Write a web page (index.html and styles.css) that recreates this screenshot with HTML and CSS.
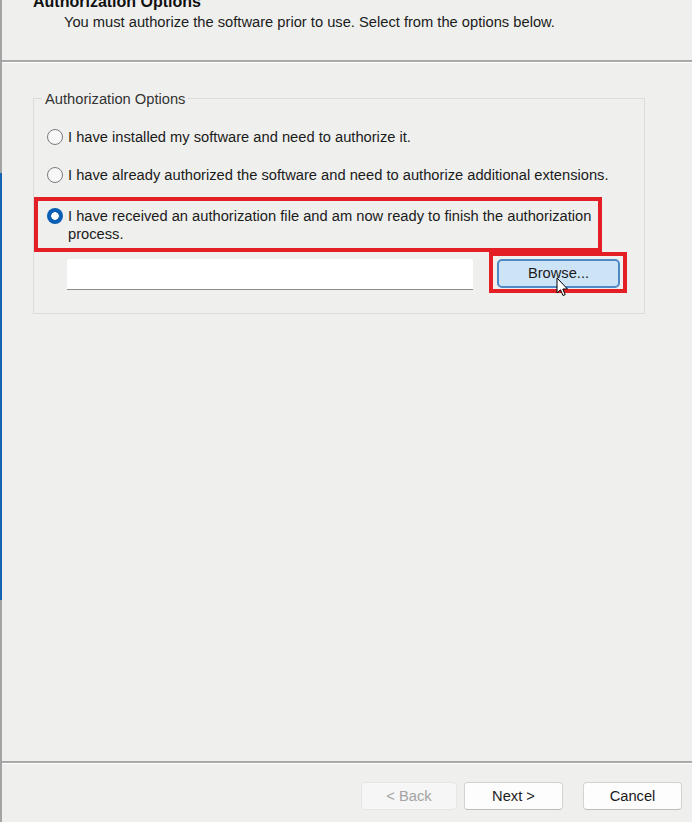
FILE: index.html
```html
<!DOCTYPE html>
<html>
<head>
<meta charset="utf-8">
<link rel="stylesheet" href="styles.css">
</head>
<body>
<div class="window">
  <div class="edge"></div>
  <div class="dialog">
    <header class="head">
      <div class="title">Authorization Options</div>
      <div class="subtitle">You must authorize the software prior to use. Select from the options below.</div>
    </header>
    <div class="sep"></div>
    <main class="content">
      <div class="group">
        <div class="legend">Authorization Options</div>
        <label class="row"><span class="radio"></span><span class="label">I have installed my software and need to authorize it.</span></label>
        <label class="row row-gap"><span class="radio"></span><span class="label">I have already authorized the software and need to authorize additional extensions.</span></label>
        <label class="row row-sel"><span class="radio checked"></span><span class="label">I have received an authorization file and am now ready to finish the authorization<br>process.</span></label>
        <div class="file-row">
          <div class="file-input"></div>
          <div class="mark">
            <div class="browse">Browse...</div>
            <svg class="cursor" width="14" height="22" viewBox="0 0 14 22"><path d="M1 1 L1 16 L4.5 12.8 L7 18.5 L9.2 17.6 L6.8 12 L11.5 12 Z" fill="#fff" stroke="#000" stroke-width="1" stroke-linejoin="round"/></svg>
          </div>
        </div>
      </div>
    </main>
    <div class="sep"></div>
    <footer class="foot">
      <div class="btn disabled w96">&lt; Back</div>
      <div class="btn w99">Next &gt;</div>
      <div class="btn w99 cancel">Cancel</div>
    </footer>
  </div>
</div>
</body>
</html>
```

FILE: styles.css
```css
* { box-sizing: border-box; }
html, body { margin: 0; padding: 0; }
body {
  width: 692px;
  height: 822px;
  overflow: hidden;
  background: #eff0ee;
  font-family: "Liberation Sans", Arial, sans-serif;
  color: #1b1b1b;
}
.window {
  display: flex;
  height: 822px;
}
.edge {
  width: 2px;
  flex: none;
  background: linear-gradient(to bottom, #a3a3a3 0, #a3a3a3 173px, #1463ae 173px, #1463ae 600px, #a3a3a3 600px);
}
.dialog {
  flex: 1;
  display: flex;
  flex-direction: column;
}
.head {
  height: 60px;
  padding-left: 31px;
}
.title {
  font-weight: bold;
  font-size: 16px;
  line-height: 18px;
  margin-top: -7px;
  color: #111;
}
.subtitle {
  font-size: 14.7px;
  line-height: 18px;
  margin-top: 2px;
  padding-left: 31px;
}
.sep {
  height: 3px;
  background: #a9a9a9;
  border-bottom: 1px solid #ffffff;
  flex: none;
}
.content {
  flex: 1;
  padding-top: 35px;
  padding-left: 31px;
}
.group {
  position: relative;
  width: 612px;
  border: 1px solid #dcdcdc;
  padding: 29px 0 20px 0;
}
.legend {
  position: absolute;
  top: -9px;
  left: 8px;
  padding: 0 3px 0 3px;
  background: #eff0ee;
  font-size: 14.7px;
  line-height: 18px;
  color: #333;
}
.row {
  display: flex;
  align-items: center;
  gap: 5px;
  padding-left: 13px;
  font-size: 14.7px;
  line-height: 18px;
  white-space: nowrap;
}
.row-gap { margin-top: 20px; }
.row-sel {
  margin-top: 13px;
  width: 568px;
  border: 4px solid #e41e25;
  padding: 6px 0 5px 9px;
  align-items: flex-start;
}
.radio {
  flex: none;
  width: 16px;
  height: 16px;
  border-radius: 50%;
  border: 1px solid #7b7b7b;
  background: #f7f7f7;
}
.row-sel .radio { margin-top: 1px; }
.radio.checked {
  border: none;
  background: radial-gradient(circle, #ffffff 0, #ffffff 3.5px, #0a5fb4 4px);
}
.file-row {
  display: flex;
  align-items: flex-start;
  padding-left: 33px;
  gap: 16px;
}
.file-input {
  margin-top: 7px;
  width: 406px;
  height: 31px;
  background: #ffffff;
  border-bottom: 1px solid #8c8c8c;
  border-radius: 3px 3px 0 0;
}
.mark {
  position: relative;
  border: 4px solid #e41e25;
  padding: 3px 3px 1px 4px;
}
.browse {
  width: 123px;
  height: 29px;
  border: 2px solid #4f8ac6;
  border-radius: 5px;
  background: #cde4f7;
  font-size: 14.7px;
  line-height: 25px;
  text-align: center;
  color: #1b1b1b;
}
.cursor {
  position: absolute;
  left: 63px;
  top: 21px;
}
.foot {
  height: 58px;
  flex: none;
  display: flex;
  justify-content: flex-end;
  align-items: flex-start;
  padding: 18px 10px 0 0;
  gap: 7px;
}
.btn {
  height: 28px;
  border: 1px solid #d2d2d2;
  border-bottom-color: #bdbdbd;
  border-radius: 4px;
  background: #fdfdfd;
  font-size: 14.7px;
  line-height: 26px;
  text-align: center;
  color: #1b1b1b;
}
.w96 { width: 96px; }
.w99 { width: 99px; }
.cancel { margin-left: 13px; }
.btn.disabled {
  background: #f5f6f5;
  border-color: #e6e6e6;
  color: #a3a3a3;
}
```
